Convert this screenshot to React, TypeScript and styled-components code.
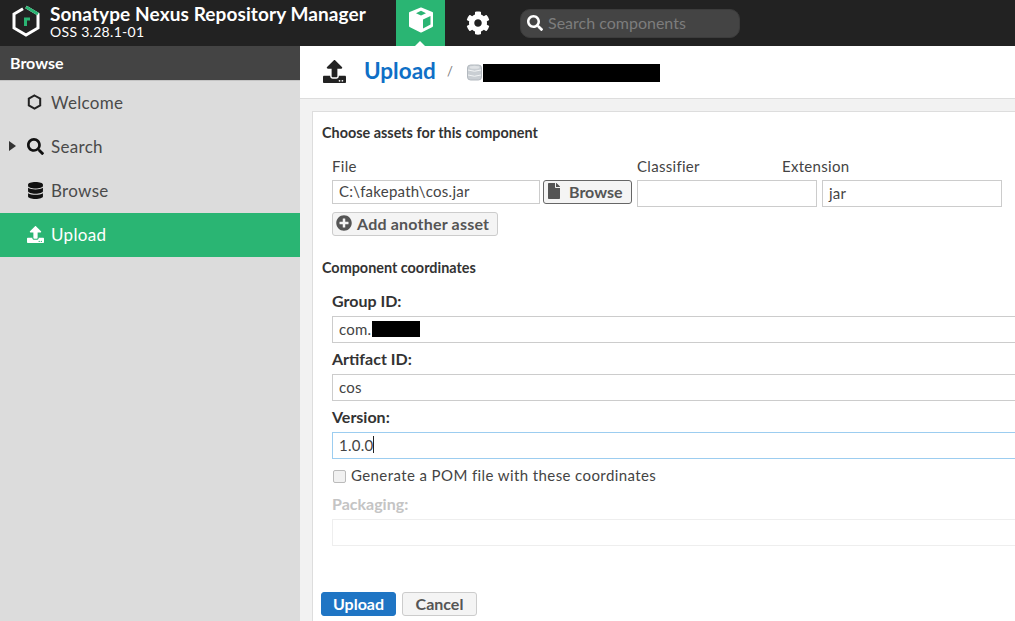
import React from 'react';
import styled, { createGlobalStyle } from 'styled-components';
import {
  FaCog,
  FaDatabase,
  FaFile,
  FaPlusCircle,
  FaSearch,
  FaUpload
} from 'react-icons/fa';

const GlobalStyle = createGlobalStyle`
  html, body {
    margin: 0;
    height: 100%;
    overflow: hidden;
    background: #fff;
  }

  * {
    box-sizing: border-box;
  }
`;

const Page = styled.div`
  width: 100%;
  height: 100vh;
  display: flex;
  flex-direction: column;
  overflow: hidden;
  font-family: Lato, 'Liberation Sans', sans-serif;
  color: #444;
`;

const TopBar = styled.header`
  height: 46px;
  flex: none;
  display: flex;
  align-items: center;
  background: #222;
  padding-left: 11px;
`;

const Brand = styled.div`
  width: 385px;
  display: flex;
  align-items: center;
  gap: 9px;
`;

const LogoSlot = styled.span`
  display: flex;
  margin-bottom: 4px;
`;

const BrandText = styled.div`
  color: #fff;
  display: flex;
  flex-direction: column;
  padding-bottom: 2px;
`;

const BrandName = styled.div`
  font-size: 19px;
  line-height: 20px;
  font-weight: 700;
  letter-spacing: 0.1px;
  white-space: nowrap;
`;

const BrandVersion = styled.div`
  font-size: 14px;
  line-height: 16px;
  letter-spacing: 0.3px;
`;

const ActiveTab = styled.div`
  position: relative;
  width: 49px;
  height: 46px;
  background: #2ab573;
  display: flex;
  justify-content: center;
  padding-top: 7px;

  &::after {
    content: '';
    position: absolute;
    left: 19px;
    bottom: 0;
    border-left: 5px solid transparent;
    border-right: 5px solid transparent;
    border-bottom: 5px solid #fff;
  }
`;

const GearTab = styled.div`
  width: 66px;
  height: 46px;
  display: flex;
  align-items: center;
  justify-content: center;
  color: #fff;
  font-size: 24px;
  margin-right: 9px;
`;

const SearchBox = styled.div`
  width: 220px;
  height: 29px;
  display: flex;
  align-items: center;
  gap: 5px;
  padding-left: 6px;
  border-radius: 10px;
  background: #444;
  border: 1px solid #3c3c3c;
  color: #fff;
  font-size: 16px;
`;

const SearchPlaceholder = styled.span`
  color: #7d7d7d;
  font-size: 16px;
  padding-bottom: 2px;
`;

const Body = styled.div`
  flex: 1;
  min-height: 0;
  display: flex;
`;

const Sidebar = styled.nav`
  width: 300px;
  flex: none;
  background: #dcdcdc;
`;

const SidebarHead = styled.div`
  height: 35px;
  padding-left: 10px;
  padding-bottom: 2px;
  display: flex;
  align-items: center;
  background: #444;
  border-bottom: 1px solid #c4c4c4;
  color: #fff;
  font-size: 16px;
  font-weight: 700;
`;

const NavItem = styled.div<{ $active?: boolean }>`
  height: 44px;
  display: flex;
  align-items: center;
  padding-left: 9px;
  padding-bottom: 2px;
  font-size: 17px;
  letter-spacing: 0.3px;
  background: ${(p) => (p.$active ? '#2ab573' : 'transparent')};
  color: ${(p) => (p.$active ? '#fff' : '#4a4a4a')};
`;

const CaretSlot = styled.span`
  width: 18px;
  flex: none;
  display: flex;
`;

const NavCaret = styled.span`
  border-top: 5px solid transparent;
  border-bottom: 5px solid transparent;
  border-left: 7px solid #333;
`;

const NavIcon = styled.span<{ $active?: boolean }>`
  width: 24px;
  flex: none;
  display: flex;
  font-size: 17px;
  color: ${(p) => (p.$active ? '#fff' : '#111')};
`;

const Main = styled.main`
  flex: 1;
  min-width: 0;
  display: flex;
  flex-direction: column;
`;

const TitleBar = styled.div`
  height: 53px;
  flex: none;
  display: flex;
  align-items: center;
  padding-left: 23px;
  border-bottom: 1px solid #ddd;
  background: #fff;
`;

const TitleIcon = styled.span`
  display: flex;
  font-size: 23px;
  color: #222;
  margin: 0 18px 2px 0;
`;

const TitleText = styled.span`
  font-size: 22.5px;
  font-weight: 700;
  color: #0f6fc6;
  width: 83px;
  margin-bottom: 4px;
`;

const TitleSlash = styled.span`
  font-size: 13px;
  color: #777;
  width: 20px;
  margin-bottom: 2px;
`;

const Redaction = styled.span<{ $w: number; $h: number; $left?: number }>`
  display: inline-block;
  width: ${(p) => p.$w}px;
  height: ${(p) => p.$h}px;
  margin-left: ${(p) => p.$left ?? 0}px;
  background: #000;
  vertical-align: middle;
`;

const TitleRedaction = styled(Redaction)`
  margin-top: 2px;
`;

const RepoIcon = styled.span`
  display: flex;
  margin: 1px 1px 0 0;
`;

const ContentArea = styled.div`
  flex: 1;
  min-height: 0;
  background: #f2f2f2;
  padding: 12px 0 0 12px;
  overflow: hidden;
`;

const Panel = styled.form`
  height: 100%;
  background: #fff;
  border-top: 1px solid #ddd;
  border-left: 1px solid #ddd;
  padding: 12px 0 0 9px;
`;

const SectionTitle = styled.div<{ $gap?: number }>`
  font-size: 14.4px;
  line-height: 18px;
  font-weight: 700;
  color: #333;
  margin-top: ${(p) => p.$gap ?? 0}px;
`;

const Indented = styled.div`
  padding-left: 10px;
`;

const AssetHead = styled.div`
  display: grid;
  grid-template-columns: 305px 145px auto;
  margin-top: 15px;
  font-size: 15px;
  line-height: 18px;
  letter-spacing: 0.3px;
  color: #444;
`;

const TextBox = styled.div<{ $w?: number; $h?: number; $focus?: boolean; $off?: boolean }>`
  width: ${(p) => p.$w ?? 700}px;
  height: ${(p) => p.$h ?? 27}px;
  flex: none;
  display: flex;
  align-items: center;
  padding-left: 6px;
  padding-bottom: 2px;
  background: #fff;
  font-size: 15px;
  letter-spacing: 0.25px;
  color: #444;
  white-space: nowrap;
  border: 1px solid ${(p) => (p.$focus ? '#9ccdf0' : p.$off ? '#eee' : '#ccc')};
`;

const AssetRow = styled.div`
  display: flex;
  align-items: flex-start;
  margin-top: 5px;

  ${TextBox} + ${TextBox} {
    margin-left: 5px;
  }
`;

const BrowseButton = styled.div`
  width: 89px;
  height: 24px;
  flex: none;
  margin: 0 5px 0 3px;
  display: flex;
  align-items: center;
  gap: 7px;
  padding-left: 2px;
  padding-bottom: 2px;
  background: #f4f4f4;
  border: 1px solid #666;
  border-radius: 3px;
  font-size: 16px;
  font-weight: 700;
  color: #555;
`;

const AddButton = styled.div`
  width: 166px;
  height: 24px;
  margin-top: 5px;
  display: flex;
  align-items: center;
  gap: 5px;
  padding-left: 3px;
  padding-bottom: 2px;
  background: #f4f4f4;
  border: 1px solid #ccc;
  border-radius: 3px;
  font-size: 16px;
  letter-spacing: 0.2px;
  font-weight: 700;
  color: #555;
`;

const Field = styled.div`
  margin-bottom: 8px;
`;

const FieldLabel = styled.div<{ $off?: boolean }>`
  font-size: 16px;
  line-height: 15px;
  font-weight: 700;
  color: ${(p) => (p.$off ? '#c4c4c4' : '#333')};
  margin-bottom: 8px;
`;

const Coordinates = styled(Indented)`
  margin-top: 16px;
`;

const TextCaret = styled.span`
  display: inline-block;
  width: 1px;
  height: 17px;
  background: #222;
`;

const CheckRow = styled.label`
  display: flex;
  align-items: center;
  gap: 5px;
  height: 26px;
  margin: -4px 0 7px;
  padding-bottom: 2px;
  font-size: 15px;
  letter-spacing: 0.4px;
  color: #444;
`;

const CheckBox = styled.input`
  appearance: none;
  width: 13px;
  height: 13px;
  margin: 2px 0 0 1px;
  background: #f1f1f1;
  border: 1px solid #bbb;
  border-radius: 2px;
`;

const Actions = styled.div`
  display: flex;
  gap: 6px;
  margin: 46px 0 0 -1px;
`;

const ActionButton = styled.div<{ $primary?: boolean }>`
  width: 75px;
  height: 24px;
  display: flex;
  align-items: center;
  justify-content: center;
  padding-bottom: 2px;
  border-radius: 3px;
  font-size: 16px;
  font-weight: 700;
  background: ${(p) => (p.$primary ? '#1f75c4' : '#f4f4f4')};
  color: ${(p) => (p.$primary ? '#fff' : '#555')};
  border: 1px solid ${(p) => (p.$primary ? '#1f75c4' : '#ccc')};
`;

const NexusLogo = () => (
  <svg width="30" height="34" viewBox="0 0 30 34">
    <path d="M15 3 L27 10 V24 L15 31 L3 24 V10 L12 4.8" fill="none" stroke="#fff" strokeWidth="3" />
    <path d="M15 3 L27 10" fill="none" stroke="#2ab573" strokeWidth="3" />
    <path d="M13 22 V13.5 H19 V16.5 H16 V22 Z" fill="#2ab573" />
  </svg>
);

const CubeIcon = () => (
  <svg width="26" height="26" viewBox="0 0 26 26">
    <path d="M13 1.5 L24 6 V19 L13 24.5 L2 19 V6 Z" fill="#fff" stroke="#fff" strokeLinejoin="round" strokeWidth="2" />
    <path d="M13 3.8 L18 6.2 L13 8.4 L8 6.2 Z" fill="#2ab573" />
    <path d="M15 12.5 L22.5 9 V17.5 L15 21.5 Z" fill="#2ab573" />
  </svg>
);

const HexIcon = () => (
  <svg width="15" height="16" viewBox="0 0 15 16">
    <path d="M7.5 1.5 L13.2 4.7 V11.3 L7.5 14.5 L1.8 11.3 V4.7 Z" fill="none" stroke="#222" strokeWidth="2" />
  </svg>
);

const RepositoryGlyph = () => (
  <svg width="15" height="17" viewBox="0 0 15 17">
    <rect x="0.5" y="1" width="14" height="15" rx="3" fill="#c9ced3" stroke="#b3b9bf" />
    <path d="M1 6 Q7.5 8.5 14 6 M1 11 Q7.5 13.5 14 11" fill="none" stroke="#f2f4f5" />
    <ellipse cx="7.5" cy="3.2" rx="5" ry="1.5" fill="#dfe2e5" />
  </svg>
);

const App = () => {
  return (
    <Page>
      <GlobalStyle />
      <TopBar>
        <Brand>
          <LogoSlot>
            <NexusLogo />
          </LogoSlot>
          <BrandText>
            <BrandName>Sonatype Nexus Repository Manager</BrandName>
            <BrandVersion>OSS 3.28.1-01</BrandVersion>
          </BrandText>
        </Brand>
        <ActiveTab>
          <CubeIcon />
        </ActiveTab>
        <GearTab>
          <FaCog />
        </GearTab>
        <SearchBox>
          <FaSearch />
          <SearchPlaceholder>Search components</SearchPlaceholder>
        </SearchBox>
      </TopBar>
      <Body>
        <Sidebar>
          <SidebarHead>Browse</SidebarHead>
          <NavItem>
            <CaretSlot />
            <NavIcon>
              <HexIcon />
            </NavIcon>
            Welcome
          </NavItem>
          <NavItem>
            <CaretSlot>
              <NavCaret />
            </CaretSlot>
            <NavIcon>
              <FaSearch />
            </NavIcon>
            Search
          </NavItem>
          <NavItem>
            <CaretSlot />
            <NavIcon>
              <FaDatabase />
            </NavIcon>
            Browse
          </NavItem>
          <NavItem $active>
            <CaretSlot />
            <NavIcon $active>
              <FaUpload />
            </NavIcon>
            Upload
          </NavItem>
        </Sidebar>
        <Main>
          <TitleBar>
            <TitleIcon>
              <FaUpload />
            </TitleIcon>
            <TitleText>Upload</TitleText>
            <TitleSlash>/</TitleSlash>
            <RepoIcon>
              <RepositoryGlyph />
            </RepoIcon>
            <TitleRedaction $w={177} $h={18} />
          </TitleBar>
          <ContentArea>
            <Panel>
              <SectionTitle>Choose assets for this component</SectionTitle>
              <Indented>
                <AssetHead>
                  <span>File</span>
                  <span>Classifier</span>
                  <span>Extension</span>
                </AssetHead>
                <AssetRow>
                  <TextBox $w={208} $h={24}>C:\fakepath\cos.jar</TextBox>
                  <BrowseButton>
                    <FaFile />
                    Browse
                  </BrowseButton>
                  <TextBox $w={180} />
                  <TextBox $w={180}>jar</TextBox>
                </AssetRow>
                <AddButton>
                  <FaPlusCircle size={16} />
                  Add another asset
                </AddButton>
              </Indented>
              <SectionTitle $gap={23}>Component coordinates</SectionTitle>
              <Coordinates>
                <Field>
                  <FieldLabel>Group ID:</FieldLabel>
                  <TextBox>
                    com.
                    <Redaction $w={48} $h={16} $left={1} />
                  </TextBox>
                </Field>
                <Field>
                  <FieldLabel>Artifact ID:</FieldLabel>
                  <TextBox>cos</TextBox>
                </Field>
                <Field>
                  <FieldLabel>Version:</FieldLabel>
                  <TextBox $focus>
                    1.0.0
                    <TextCaret />
                  </TextBox>
                </Field>
                <CheckRow>
                  <CheckBox type="checkbox" readOnly />
                  Generate a POM file with these coordinates
                </CheckRow>
                <FieldLabel $off>Packaging:</FieldLabel>
                <TextBox $off />
              </Coordinates>
              <Actions>
                <ActionButton $primary>Upload</ActionButton>
                <ActionButton>Cancel</ActionButton>
              </Actions>
            </Panel>
          </ContentArea>
        </Main>
      </Body>
    </Page>
  );
};

export default App;
